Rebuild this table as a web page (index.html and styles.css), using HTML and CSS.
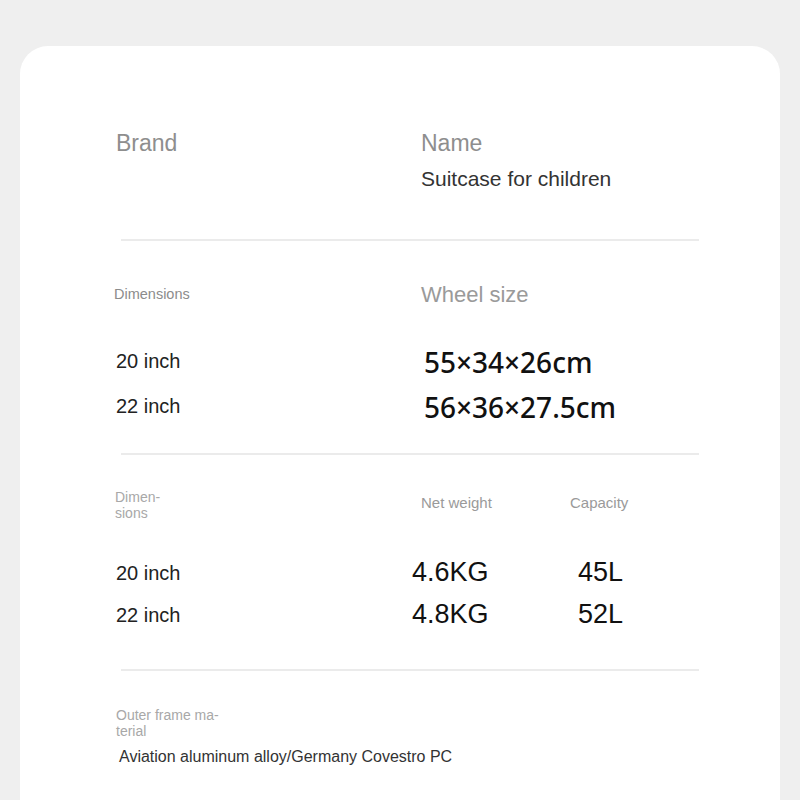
FILE: index.html
```html
<!DOCTYPE html>
<html lang="en">
<head>
<meta charset="utf-8">
<title>Suitcase specs</title>
<link rel="stylesheet" href="styles.css">
</head>
<body>
<main class="card">
  <section class="sec sec-name">
    <div class="col">
      <div class="head-lg">Brand</div>
    </div>
    <div class="col">
      <div class="head-lg">Name</div>
      <div class="name-val">Suitcase for children</div>
    </div>
  </section>
  <hr class="divider div-1">

  <section class="sec sec-wheel">
    <div class="wheel-head">
      <div class="label-sm dims-label">Dimensions</div>
      <div class="head-lg">Wheel size</div>
    </div>
    <div class="wheel-row">
      <div class="inch inch-wheel">20 inch</div>
      <div class="wheel-val">55×34×26cm</div>
    </div>
    <div class="wheel-row">
      <div class="inch inch-wheel">22 inch</div>
      <div class="wheel-val">56×36×27.5cm</div>
    </div>
  </section>
  <hr class="divider div-2">

  <section class="sec sec-weight">
    <div class="weight-head">
      <div class="label-sm two-line">Dimen-<br>sions</div>
      <div class="head-md net-head">Net weight</div>
      <div class="head-md">Capacity</div>
    </div>
    <div class="weight-row">
      <div class="inch inch-weight">20 inch</div>
      <div class="big-val">4.6KG</div>
      <div class="big-val cap-val">45L</div>
    </div>
    <div class="weight-row">
      <div class="inch inch-weight">22 inch</div>
      <div class="big-val">4.8KG</div>
      <div class="big-val cap-val">52L</div>
    </div>
  </section>
  <hr class="divider div-3">

  <section class="sec sec-material">
    <div class="label-sm two-line">Outer frame ma-<br>terial</div>
    <div class="material-val">Aviation aluminum alloy/Germany Covestro PC</div>
  </section>
</main>
</body>
</html>
```

FILE: styles.css
```css
html, body {
  margin: 0;
  padding: 0;
}
body {
  background: #efefef;
  font-family: "Liberation Sans", Arial, sans-serif;
  padding-top: 46px;
  min-height: 800px;
  box-sizing: border-box;
}
.card {
  margin: 0 20px;
  background: #ffffff;
  border-radius: 28px;
  padding: 83px 0 80px 0;
  display: flex;
  flex-direction: column;
}
.sec {
  padding-left: 96px;
}
.divider {
  border: 0;
  height: 2px;
  background: #ebebeb;
  margin: 0 81px 0 101px;
}

/* section 1 */
.sec-name {
  display: grid;
  grid-template-columns: 305px 1fr;
}
.head-lg {
  font-size: 23px;
  line-height: 28px;
  color: #8e8e8e;
}
.name-val {
  margin-top: 9px;
  font-size: 21px;
  line-height: 26px;
  color: #333333;
}
.div-1 {
  margin-top: 47px;
}

/* section 2 */
.sec-wheel {
  padding-top: 41px;
  display: flex;
  flex-direction: column;
}
.wheel-head {
  display: grid;
  grid-template-columns: 305px 1fr;
  align-items: start;
}
.wheel-head .head-lg {
  font-size: 22px;
  line-height: 26px;
  color: #9a9a9a;
}
.label-sm {
  font-size: 14.5px;
  line-height: 18px;
  color: #8c8c8c;
  margin-left: -2px;
}
.dims-label {
  margin-top: 3px;
}
.wheel-row {
  display: grid;
  grid-template-columns: 305px 1fr;
  align-items: start;
  margin-top: 13px;
}
.wheel-head + .wheel-row {
  margin-top: 38px;
}
.inch {
  font-size: 20px;
  line-height: 24px;
  color: #222222;
}
.inch-wheel {
  margin-top: 3px;
}
.wheel-val {
  font-family: "Noto Sans", "Open Sans", sans-serif;
  font-size: 28px;
  font-weight: 500;
  line-height: 32px;
  color: #111111;
  padding-left: 3px;
}
.div-2 {
  margin-top: 30px;
}

/* section 3 */
.sec-weight {
  padding-top: 35px;
  display: flex;
  flex-direction: column;
}
.weight-head {
  display: grid;
  grid-template-columns: 296px 158px 1fr;
  align-items: start;
}
.two-line {
  font-size: 14px;
  line-height: 15.5px;
  color: #a8a8a8;
  margin-left: -1px;
}
.head-md {
  font-size: 15px;
  line-height: 18px;
  color: #9a9a9a;
  margin-top: 4px;
}
.net-head {
  padding-left: 9px;
}
.weight-row {
  display: grid;
  grid-template-columns: 296px 158px 1fr;
  align-items: start;
  margin-top: 10px;
}
.weight-head + .weight-row {
  margin-top: 35px;
}
.inch-weight {
  margin-top: 4.5px;
}
.big-val {
  font-size: 27px;
  line-height: 32px;
  color: #111111;
}
.cap-val {
  padding-left: 8px;
}
.div-3 {
  margin-top: 39px;
}

/* section 4 */
.sec-material {
  padding-top: 37px;
  display: flex;
  flex-direction: column;
}
.sec-material .two-line {
  margin-left: 0;
}
.material-val {
  margin-top: 7px;
  padding-left: 3px;
  font-size: 16px;
  line-height: 22px;
  color: #333333;
}
```
